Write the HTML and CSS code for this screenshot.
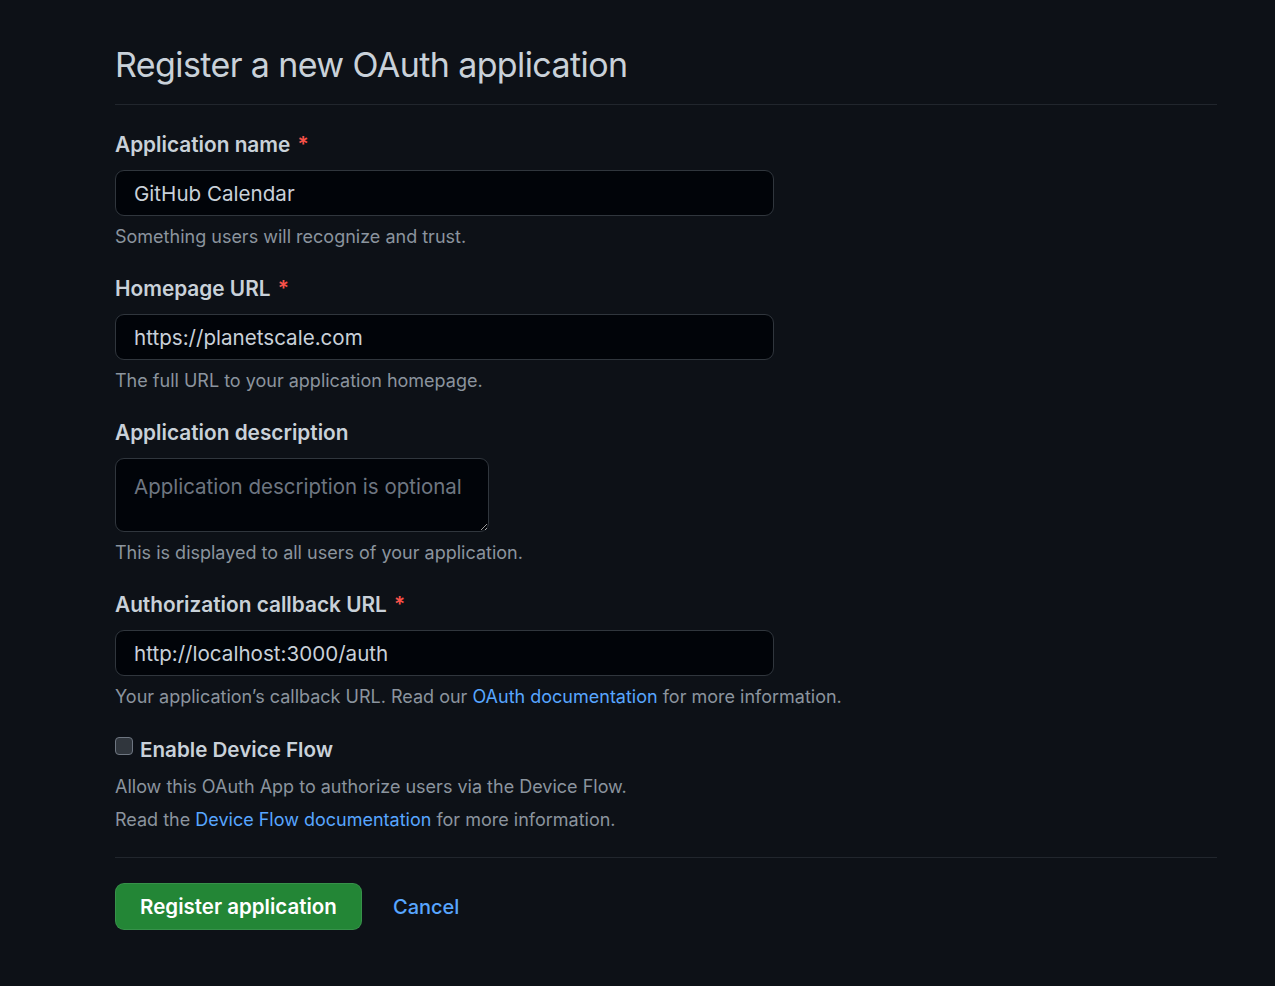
FILE: index.html
```html
<!DOCTYPE html>
<html lang="en">
<head>
<meta charset="utf-8">
<title>Register a new OAuth application</title>
<link rel="stylesheet" href="styles.css">
</head>
<body>
<main class="page">
  <h1 class="title">Register a new OAuth application</h1>
  <form class="form">
    <div class="field">
      <label class="label" for="name">Application name <span class="req">*</span></label>
      <input class="input" id="name" type="text" value="GitHub Calendar">
      <p class="note">Something users will recognize and trust.</p>
    </div>
    <div class="field">
      <label class="label" for="home">Homepage URL <span class="req">*</span></label>
      <input class="input" id="home" type="text" value="https://planetscale.com">
      <p class="note">The full URL to your application homepage.</p>
    </div>
    <div class="field">
      <label class="label" for="desc">Application description</label>
      <textarea class="textarea" id="desc" placeholder="Application description is optional"></textarea>
      <p class="note">This is displayed to all users of your application.</p>
    </div>
    <div class="field">
      <label class="label" for="cb">Authorization callback URL <span class="req">*</span></label>
      <input class="input" id="cb" type="text" value="http://localhost:3000/auth">
      <p class="note">Your application’s callback URL. Read our <a class="link" href="#">OAuth documentation</a> for more information.</p>
    </div>
    <div class="field">
      <label class="check-row"><span class="checkbox"></span><span class="check-label">Enable Device Flow</span></label>
      <p class="note note-first">Allow this OAuth App to authorize users via the Device Flow.</p>
      <p class="note note-second">Read the <a class="link" href="#">Device Flow documentation</a> for more information.</p>
    </div>
    <div class="actions">
      <button class="btn" type="button">Register application</button>
      <a class="cancel" href="#">Cancel</a>
    </div>
  </form>
</main>
</body>
</html>
```

FILE: styles.css
```css
* { box-sizing: border-box; }
html, body {
  margin: 0;
  background: #0d1117;
}
body {
  font-family: Inter, "Noto Sans", "Liberation Sans", sans-serif;
  color: #c9d1d9;
  height: 986px;
  overflow: hidden;
}
.page {
  width: 1102px;
  margin-left: 115px;
  padding-top: 42px;
}
.title {
  margin: 0;
  font-size: 34px;
  font-weight: 400;
  line-height: 45px;
  color: #c9d1d9;
  padding-bottom: 17px;
  border-bottom: 1px solid #21262d;
  letter-spacing: -0.6px;
}
.form {
  padding-top: 25px;
}
.field {
  margin-bottom: 24px;
}
.label {
  display: block;
  font-size: 20.8px;
  font-weight: 600;
  line-height: 30px;
  margin-bottom: 10px;
  color: #c9d1d9;
}
.req {
  color: #f85149;
  margin-left: 2px;
}
.input, .textarea {
  display: block;
  width: 659px;
  height: 46px;
  padding: 0 18px;
  background: #010409;
  border: 1px solid #30363d;
  border-radius: 9px;
  color: #c9d1d9;
  font-family: inherit;
  font-size: 20.6px;
  line-height: 30px;
  outline: none;
}
.textarea {
  width: 374px;
  height: 74px;
  padding: 13px 18px;
  resize: vertical;
  font-size: 20.5px;
}
.textarea::placeholder { color: #6e7681; }
.note {
  margin: 7px 0 0;
  font-size: 18px;
  line-height: 27px;
  color: #8b949e;
}
.note-first { margin-top: 9px; }
.note-second { margin-top: 6px; }
.link, .cancel {
  color: #58a6ff;
  text-decoration: none;
}
.check-row {
  display: flex;
  align-items: center;
  gap: 7px;
  height: 30px;
}
.checkbox {
  width: 18px;
  height: 18px;
  border-radius: 4px;
  background: #30363d;
  border: 1px solid #6e7681;
  margin-top: -7px;
}
.check-label {
  font-size: 20.6px;
  font-weight: 600;
  color: #c9d1d9;
}
.actions {
  border-top: 1px solid #21262d;
  margin-top: 24px;
  padding-top: 25px;
  display: flex;
  align-items: center;
  gap: 31px;
}
.field:last-of-type { margin-bottom: 0; }
.btn {
  width: 247px;
  height: 47px;
  background: #238636;
  border: 1px solid rgba(240, 246, 252, 0.1);
  border-radius: 9px;
  color: #ffffff;
  font-family: inherit;
  font-size: 20.5px;
  font-weight: 600;
}
.cancel {
  font-size: 20px;
  font-weight: 500;
}
```
